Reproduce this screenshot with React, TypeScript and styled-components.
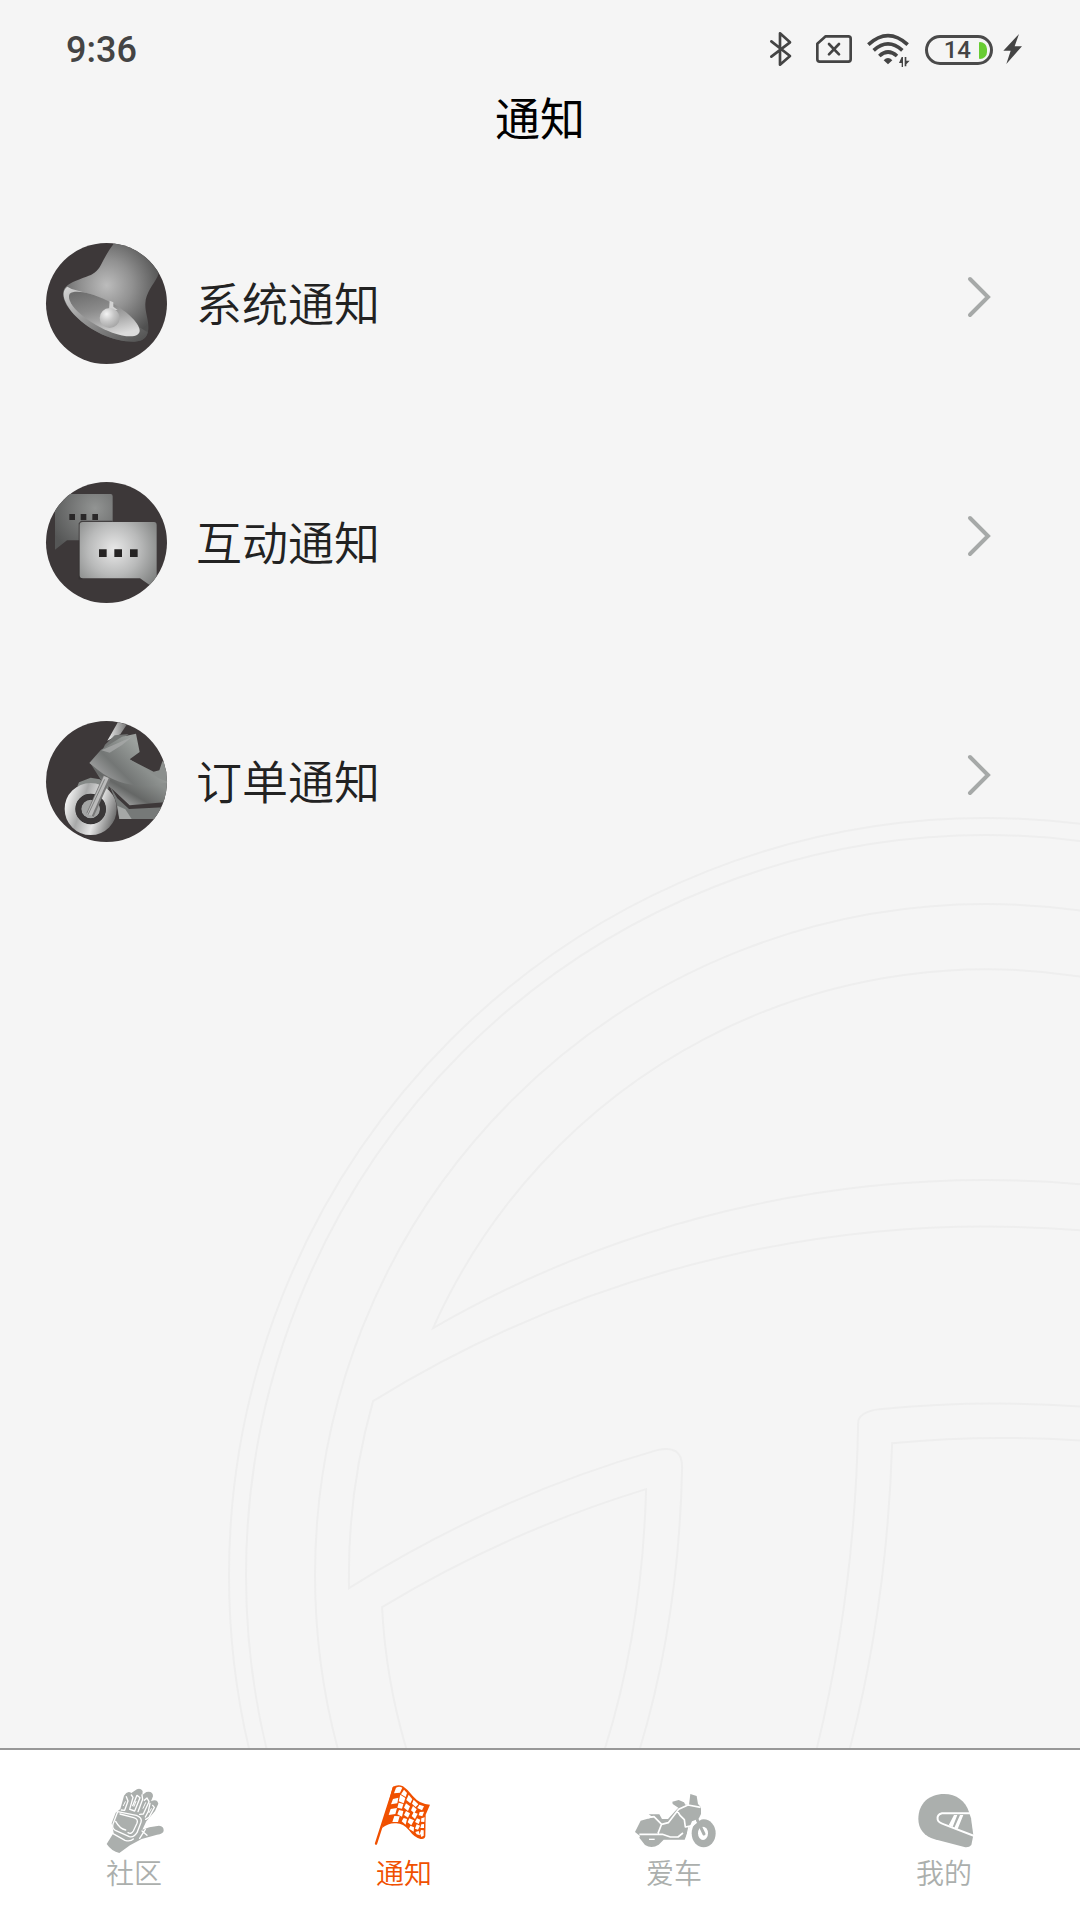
import React from "react";
import styled, { createGlobalStyle } from "styled-components";

const cjk = `"Noto Sans CJK SC", "Noto Sans", sans-serif`;

const GlobalStyle = createGlobalStyle`
  * { box-sizing: border-box; }
  body { margin: 0; background: #f5f5f5; font-family: ${cjk}; }
`;

const Page = styled.div`
  min-height: 100vh;
  display: flex;
  flex-direction: column;
  background: #f5f5f5;
`;

const Screen = styled.div`
  position: relative;
  flex: 1;
  overflow: hidden;
`;

const Watermark = styled.svg`
  position: absolute;
  right: 0;
  bottom: 0;
  width: 81.5%;
  height: auto;
  fill: none;
  stroke: #eeeeee;
  stroke-width: 2px;
  pointer-events: none;
`;

const Content = styled.div`
  position: relative;
`;

const StatusBar = styled.div`
  display: flex;
  align-items: center;
  justify-content: space-between;
  padding: 32px 58px 0 66px;
`;

const Clock = styled.time`
  font: 500 36px/36px Roboto, sans-serif;
  color: #444;
`;

const StatusIcons = styled.div`
  display: flex;
  align-items: center;
  gap: 10px;
  color: #444;
`;

const StatusIcon = styled.svg`
  display: block;
  height: 36px;
  width: auto;
`;

const Battery = styled.div`
  display: flex;
  align-items: center;
  justify-content: flex-end;
  gap: 8px;
  width: 68px;
  height: 30px;
  padding-right: 3px;
  border: 3px solid #4a4a4a;
  border-radius: 15px;
  font: 500 24px/24px Roboto, sans-serif;
`;

const Charge = styled.span`
  width: 8px;
  height: 17px;
  border-radius: 1px 8px 8px 1px;
  background: #68cc33;
`;

const Title = styled.h1`
  margin: 17px 0 0;
  font-size: 45px;
  line-height: 64px;
  font-weight: 400;
  text-align: center;
  color: #000;
`;

const List = styled.ul`
  display: flex;
  flex-direction: column;
  gap: 118px;
  margin: 0;
  padding: 94px 89px 0 46px;
  list-style: none;
`;

const Row = styled.a`
  display: flex;
  align-items: center;
  gap: 29px;
  color: #222;
  text-decoration: none;
`;

const Avatar = styled.svg`
  display: block;
  flex: none;
  width: 121px;
  height: 121px;
  border-radius: 50%;
  background: #3d3839;
`;

const RowLabel = styled.span`
  flex: 1;
  padding-bottom: 6px;
  font-size: 46px;
  line-height: 64px;
  font-weight: 350;
`;

const Chevron = styled.svg`
  width: 24px;
  height: 42px;
  margin-bottom: 14px;
  fill: none;
  stroke: #a6a9a8;
  stroke-width: 4px;
  stroke-linecap: round;
`;

const TabBar = styled.nav`
  display: grid;
  grid-template-columns: repeat(4, 1fr);
  height: 172px;
  border-top: 2px solid #989898;
  background: #fff;
`;

const Tab = styled.a<{ $active?: boolean }>`
  display: flex;
  flex-direction: column;
  align-items: center;
  padding-top: 32px;
  padding-right: 2px;
  color: ${(p) => (p.$active ? "#f05000" : "#abafad")};
  font-size: 28px;
  line-height: 36px;
  font-weight: 350;
  text-decoration: none;
`;

const TabIcon = styled.svg`
  width: 84px;
  height: 72px;
`;

const BellArt = () => (
  <Avatar viewBox="48 38 363 363" aria-hidden="true">
    <defs>
      <radialGradient id="bellBody" gradientUnits="userSpaceOnUse" cx="230" cy="165" r="170">
        <stop offset="0" stopColor="#bcbcbc" />
        <stop offset="0.45" stopColor="#919191" />
        <stop offset="1" stopColor="#505050" />
      </radialGradient>
      <linearGradient id="bellRim" x1="0" y1="0" x2="1" y2="1">
        <stop offset="0" stopColor="#d6d6d6" />
        <stop offset="0.4" stopColor="#999" />
        <stop offset="1" stopColor="#4e4e4e" />
      </linearGradient>
      <linearGradient id="bellMouth" x1="0.2" y1="0" x2="0.6" y2="1">
        <stop offset="0" stopColor="#6e6e6e" />
        <stop offset="0.4" stopColor="#8a8a8a" />
        <stop offset="0.65" stopColor="#a6a6a6" />
        <stop offset="1" stopColor="#dcdcdc" />
      </linearGradient>
      <radialGradient id="bellBall" cx="0.35" cy="0.3" r="0.75">
        <stop offset="0" stopColor="#f4f4f4" />
        <stop offset="0.5" stopColor="#c6c6c6" />
        <stop offset="1" stopColor="#a4a4a4" />
      </radialGradient>
    </defs>
    <path fill="url(#bellBody)" d="M256 34C235 60 224 82 213 103C202 124 189 132 169 139C139 150 114 158 103 175C91 198 109 231 139 259C181 299 245 334 314 334C340 334 353 320 355 297C357 269 345 248 346 220C347 187 370 164 383 138L410 38Z" />
    <path fill="url(#bellRim)" d="M112 169C90 184 102 220 136 256C180 301 247 334 312 334C338 333 350 322 353 306L327 290L200 196L125 176Z" />
    <path fill="url(#bellMouth)" d="M119 190C135 178 178 185 234 212C288 239 326 276 329 299C331 322 293 323 247 307C181 283 103 222 119 190Z" />
    <path fill="#d2d2d2" d="M239 211L250 216L250 229L263 239L237 239Z" />
    <circle cx="239" cy="263" r="30" fill="url(#bellBall)" />
  </Avatar>
);

const ChatArt = () => (
  <Avatar viewBox="48 36 363 363" aria-hidden="true">
    <defs>
      <radialGradient id="chatBack" gradientUnits="userSpaceOnUse" cx="195" cy="115" r="145">
        <stop offset="0" stopColor="#929493" />
        <stop offset="1" stopColor="#555656" />
      </radialGradient>
      <radialGradient id="chatFront" gradientUnits="userSpaceOnUse" cx="252" cy="238" r="155">
        <stop offset="0" stopColor="#e8e8e8" />
        <stop offset="0.5" stopColor="#b9baba" />
        <stop offset="1" stopColor="#7d7f7e" />
      </radialGradient>
    </defs>
    <path fill="url(#chatBack)" d="M82 72H242Q248 72 248 79V211H111L75 239V80Q75 72 82 72Z" />
    <path fill="#292728" d="M118 132h17v18h-17zM152 132h17v18h-17zM187 132h17v18h-17z" />
    <path fill="#343132" opacity="0.8" d="M153 152H248V159H158V328H146V160Z" />
    <path fill="url(#chatFront)" d="M158 156H372Q380 156 380 165V360L330 325H158Q149 325 149 316V165Q149 156 158 156Z" />
    <path fill="#252323" d="M207 238h23v23h-23zM253 238h23v23h-23zM300 238h23v23h-23z" />
  </Avatar>
);

const ScooterArt = () => (
  <Avatar viewBox="48 33 363 363" aria-hidden="true">
    <defs>
      <linearGradient id="scootBody" gradientUnits="userSpaceOnUse" x1="220" y1="220" x2="330" y2="110">
        <stop offset="0" stopColor="#a2a3a3" />
        <stop offset="0.4" stopColor="#737675" />
        <stop offset="1" stopColor="#9ca19e" />
      </linearGradient>
      <linearGradient id="scootPanel" gradientUnits="userSpaceOnUse" x1="270" y1="290" x2="330" y2="190">
        <stop offset="0" stopColor="#b0b1b1" />
        <stop offset="0.45" stopColor="#656766" />
        <stop offset="1" stopColor="#8b8f8d" />
      </linearGradient>
      <linearGradient id="scootTyre" gradientUnits="userSpaceOnUse" x1="110" y1="270" x2="262" y2="320">
        <stop offset="0" stopColor="#f0f0f0" />
        <stop offset="0.3" stopColor="#a8a9a9" />
        <stop offset="0.6" stopColor="#e6e6e6" />
        <stop offset="1" stopColor="#626262" />
      </linearGradient>
      <linearGradient id="scootShield">
        <stop offset="0" stopColor="#eee" />
        <stop offset="1" stopColor="#777" />
      </linearGradient>
    </defs>
    <path fill="url(#scootShield)" d="M264 36L290 44L271 73L232 92Z" />
    <path fill="#727473" d="M225 104L254 76L296 72L270 91L217 121Z" />
    <path fill="#767978" d="M238 225L262 265L297 297L402 292L382 327L268 327L258 275Z" />
    <path fill="#a6a8a7" d="M262 287L286 298L305 327H268Z" />
    <path fill="url(#scootPanel)" d="M180 158L298 148L371 185L388 181L397 154L415 158V276L299 286L249 239L213 210Z" />
    <path fill="url(#scootBody)" d="M178 159L213 119L276 80L318 71L329 126L299 148L386 205L415 217L348 227C291 229 244 211 205 181Z" />
    <path fill="#a8aaa9" opacity="0.75" d="M214 121L307 80L276 105L239 128Z" />
    <path fill="#858987" d="M147 217L182 203L209 208L236 229L234 243L182 232L142 229Z" />
    <circle cx="182" cy="297" r="62" fill="#333132" stroke="url(#scootTyre)" strokeWidth="32" />
    <circle cx="182" cy="297" r="28" fill="#a4a5a5" />
    <circle cx="182" cy="297" r="37" fill="none" stroke="#3a3738" strokeWidth="16" />
    <path fill="none" stroke="#777" strokeWidth="24" d="M180 315L231 201" />
    <path fill="none" stroke="#bbb" strokeWidth="16" d="M178 315L229 201" />
    <path fill="none" stroke="#808281" strokeWidth="3" d="M174 314L224 208" />
  </Avatar>
);

const GloveIcon = () => (
  <TabIcon viewBox="36 126 252 216" aria-hidden="true">
    <path fill="currentColor" d="M80 312L101 278L95 250L107 218L121 207L132 167Q142 151 154 159L164 152Q179 140 188 153L187 165L199 156Q219 152 219 169L213 184Q231 175 235 191L225 213L199 244L187 269L208 262L237 257Q252 259 251 272Q250 281 231 284L185 297L150 316L118 339Q95 334 80 312Z" />
    <g fill="none" stroke="#fff" strokeWidth="4" strokeLinecap="round" strokeLinejoin="round">
      <path d="M113 215L169 226Q188 233 183 247L171 278Q160 294 148 290L106 271Q95 265 99 252Z" />
      <path d="M120 222L161 233Q176 237 171 250L160 273Q153 284 144 278" />
      <path d="M107 244Q119 266 137 270M99 281L135 301Q151 306 160 297" />
      <path d="M186 273L201 286M196 268L179 295" />
      <path d="M139 170L144 183L134 211L124 210M154 165L159 172L149 208M150 208L164 213L180 173L171 166L158 197" />
      <path d="M186 165L188 178L174 215M193 181L201 174L207 185L190 222L179 223M210 190L205 214L196 231M218 196L223 202L207 232L197 238" />
      <path d="M136 185L130 197M168 184L162 199M197 188L189 205M214 206L207 218" strokeWidth="3" />
    </g>
  </TabIcon>
);

const FlagIcon = () => (
  <TabIcon viewBox="846 126 252 216" aria-hidden="true">
    <path fill="none" stroke="currentColor" strokeWidth="7" strokeLinecap="round" d="M942 143L888 311" />
    <path fill="currentColor" d="M938 141Q954 131 969 139Q984 149 999 169Q1020 194 1050 194L1037 224L1036 289Q1034 299 1022 297Q1004 294 987 271Q969 249 947 250Q925 249 906 264Z" />
    <g fill="#fff">
      <path d="M948 143Q958 137 967 143L960 158L942 160Z" />
      <path d="M972 149L981 159L977 171L963 163Z" />
      <path d="M939 177L955 173L952 190L933 193Z" />
      <path d="M961 164L976 174L971 190L956 184Z" />
      <path d="M986 164L997 178L991 190L979 180Z" />
      <path d="M1001 179L1015 193L1007 201L996 191Z" />
      <path d="M932 207L951 204L946 222L926 225Z" />
      <path d="M956 188L970 192L966 206L952 203Z" />
      <path d="M978 190L990 199L984 213L972 203Z" />
      <path d="M999 198L1010 208L1003 220L993 211Z" />
      <path d="M1018 194L1032 199L1026 211L1012 204Z" />
      <path d="M943 228L959 229L954 246L937 246Z" />
      <path d="M957 210L970 213L966 230L952 223Z" />
      <path d="M978 213L990 220L984 233L972 225Z" />
      <path d="M1001 217L1013 221L1005 237L995 228Z" />
      <path d="M1019 216L1032 215L1027 229L1016 226Z" />
      <path d="M971 234L981 237L977 254L965 244Z" />
      <path d="M988 235L1002 241L994 256L983 247Z" />
      <path d="M1011 235L1021 239L1016 252L1005 246Z" />
      <path d="M1024 235L1034 232L1033 246L1023 245Z" />
      <path d="M991 257L1002 262L1001 275L987 266Z" />
      <path d="M1010 253L1020 257L1014 269L1005 266Z" />
      <path d="M1024 253L1032 252L1032 264L1021 264Z" />
      <path d="M1006 276L1016 273L1020 286L1010 283Z" />
      <path d="M1023 270L1031 271L1031 287L1024 291L1020 280Z" />
    </g>
  </TabIcon>
);

const BikeIcon = () => (
  <TabIcon viewBox="96 126 252 216" aria-hidden="true">
    <g fill="currentColor">
      <path d="M146 223H178L186 237H204L225 214L235 203L218 192L217 185L236 180L252 187L256 194L267 195L271 162L290 168L294 192L303 202V222L296 236L276 244L269 260L254 299H191L176 314Q155 328 135 315L118 293L120 288L105 276L122 242L159 232Z" />
      <ellipse cx="311" cy="280" rx="36" ry="42" />
    </g>
    <g fill="none" stroke="#fff" strokeLinejoin="round">
      <path strokeWidth="5" d="M143 233L162 230L185 253L205 248L236 208L264 195L302 202M231 211L240 226L253 239L256 261L277 257L303 236M185 252L174 280M118 283H187L211 291H234L249 279" />
      <path strokeWidth="4" d="M267 260Q263 275 260 299" />
      <path strokeWidth="4" d="M147 298H164" />
    </g>
    <ellipse cx="309" cy="280" rx="15" ry="20" fill="#fff" />
    <path fill="none" stroke="currentColor" strokeWidth="9" strokeLinecap="round" d="M292 240L312 282" />
  </TabIcon>
);

const HelmetIcon = () => (
  <TabIcon viewBox="906 126 252 216" aria-hidden="true">
    <path fill="currentColor" d="M955 237C955 190 988 162 1032 162C1070 162 1096 183 1107 216L1113 235L1120 286L1114 315Q1108 323 1096 322L1004 298C973 289 955 267 955 237Z" />
    <path fill="none" stroke="#fff" strokeWidth="6" strokeLinejoin="round" d="M1112 220H1026Q1010 224 1013 239Q1015 248 1034 254L1123 288" />
    <path fill="#fff" d="M1062 225H1072L1058 261L1046 256ZM1080 225H1090L1073 267L1063 263Z" />
  </TabIcon>
);

const notices = [
  { label: "系统通知", Art: BellArt },
  { label: "互动通知", Art: ChatArt },
  { label: "订单通知", Art: ScooterArt },
];

const tabs = [
  { label: "社区", Icon: GloveIcon },
  { label: "通知", Icon: FlagIcon, active: true },
  { label: "爱车", Icon: BikeIcon },
  { label: "我的", Icon: HelmetIcon },
];

export default function App() {
  return (
    <Page>
      <GlobalStyle />
      <Screen>
        <Watermark viewBox="0 0 880 988" aria-hidden="true">
          <circle cx="786" cy="815" r="757" />
          <circle cx="786" cy="815" r="740" />
          <circle cx="786" cy="815" r="671" />
          <path d="M900 220A606 606 0 0 0 233 568A1107 1107 0 0 1 900 426" />
          <path d="M900 472A1167 1167 0 0 0 173 641A637 637 0 0 0 149 828A1189 1189 0 0 1 457 690Q482 684 482 707Q479 860 439 991" />
          <path d="M207 991A605 605 0 0 1 182 847A1170 1170 0 0 1 446 729Q442 872 404 991" />
          <path d="M900 648A1189 1189 0 0 0 679 649Q658 652 658 663Q655 833 616 991" />
          <path d="M900 682A1170 1170 0 0 0 692 683Q687 846 649 991" />
        </Watermark>
        <Content>
          <StatusBar>
            <Clock>9:36</Clock>
            <StatusIcons>
              <StatusIcon viewBox="72 66 108 108" width="36" aria-hidden="true">
                <path fill="none" stroke="currentColor" strokeWidth="8" strokeLinecap="round" strokeLinejoin="round" d="M94 94L150 138L120 164V70L150 97L94 140" />
              </StatusIcon>
              <StatusIcon viewBox="210 66 141 108" width="47" aria-hidden="true">
                <path fill="none" stroke="currentColor" strokeWidth="8" strokeLinejoin="round" d="M257 79H325Q332 79 332 86V148Q332 155 325 155H239Q232 155 232 148V101Z" />
                <path fill="none" stroke="currentColor" strokeWidth="8" strokeLinecap="round" d="M267 102L297 133M297 102L267 133" />
              </StatusIcon>
              <StatusIcon viewBox="381 66 144 108" width="48" aria-hidden="true">
                <g fill="none" stroke="currentColor" strokeWidth="11">
                  <path d="M385 104Q444 50 503 104" />
                  <path d="M401 121Q444 82 487 121" />
                  <path d="M418 138Q444 114 471 138" />
                </g>
                <path fill="currentColor" d="M431 151Q444 137 457 151L444 163ZM485 141H489V171H485V159L477 159ZM494 141H499V152H509L499 163V169H494Z" />
              </StatusIcon>
              <Battery>
                14
                <Charge />
              </Battery>
              <StatusIcon viewBox="789 66 57 108" width="19" aria-hidden="true">
                <path fill="currentColor" d="M837 72L790 122H812L799 162L846 109H824Z" />
              </StatusIcon>
            </StatusIcons>
          </StatusBar>
          <Title>通知</Title>
          <List>
            {notices.map(({ label, Art }) => (
              <li key={label}>
                <Row href="#">
                  <Art />
                  <RowLabel>{label}</RowLabel>
                  <Chevron viewBox="0 0 24 42" aria-hidden="true">
                    <path d="M3 3L21 21L3 39" />
                  </Chevron>
                </Row>
              </li>
            ))}
          </List>
        </Content>
      </Screen>
      <TabBar>
        {tabs.map(({ label, Icon, active }) => (
          <Tab key={label} href="#" $active={active} aria-current={active ? "page" : undefined}>
            <Icon />
            {label}
          </Tab>
        ))}
      </TabBar>
    </Page>
  );
}
